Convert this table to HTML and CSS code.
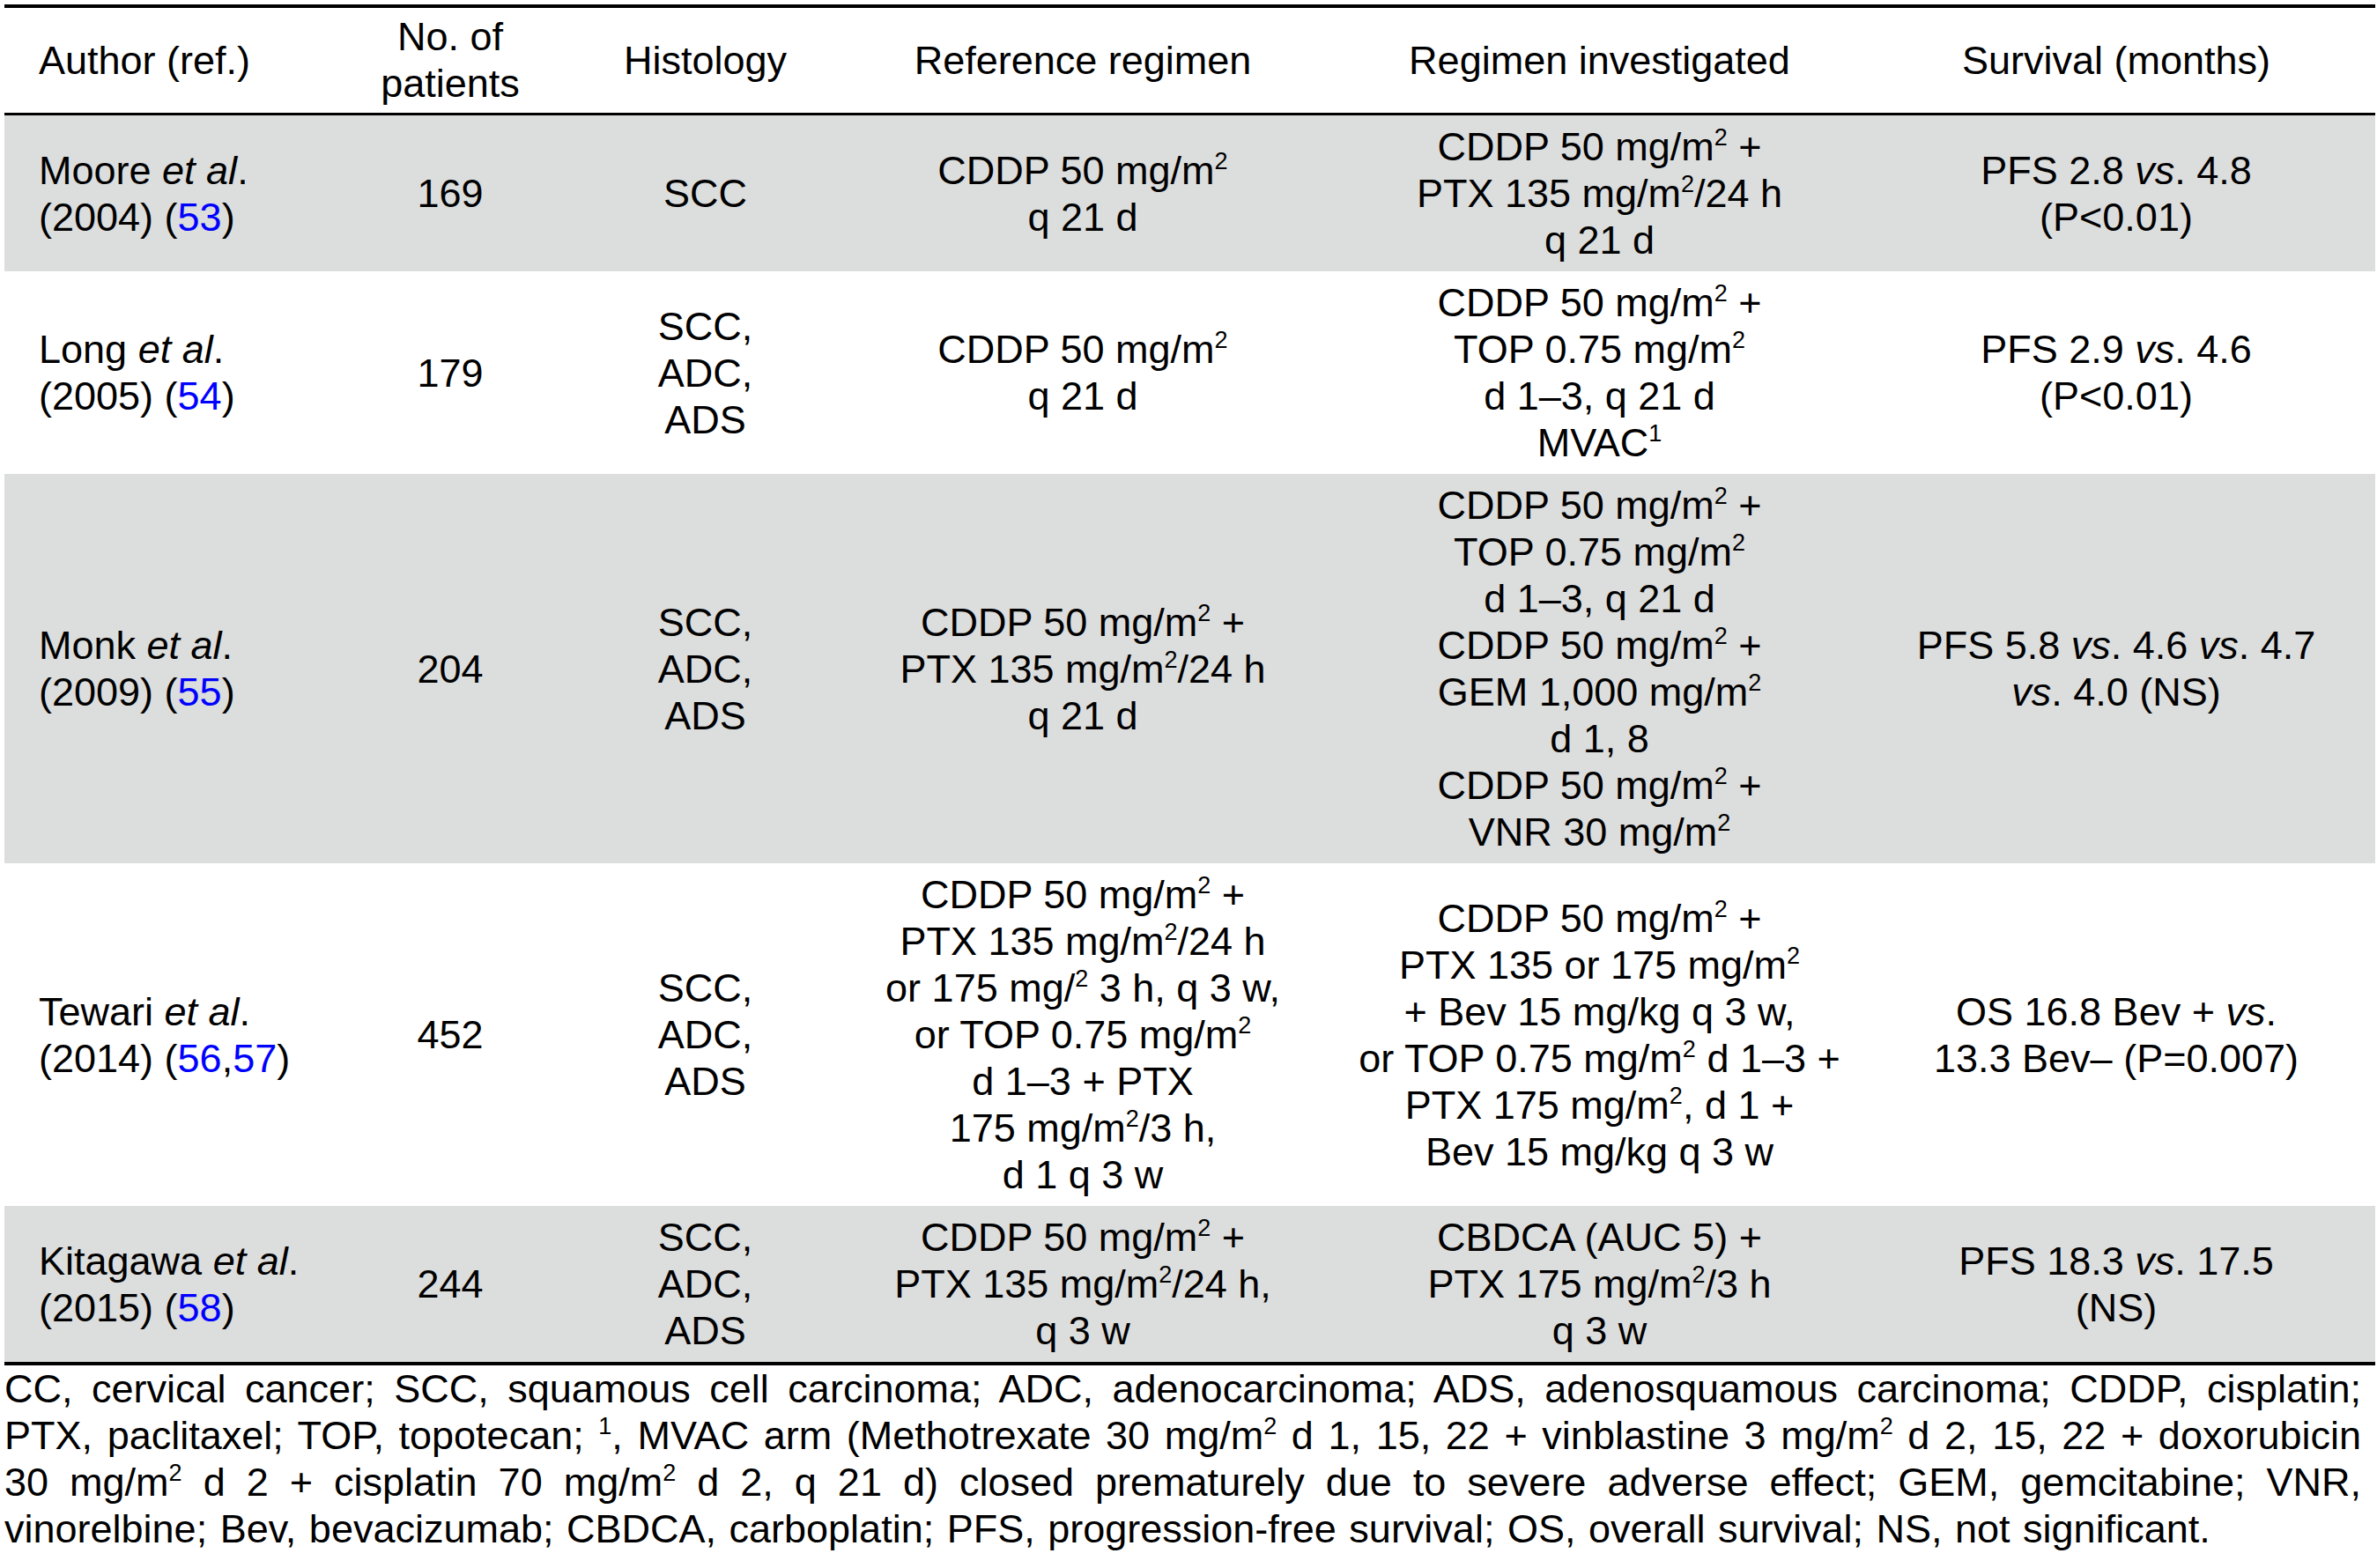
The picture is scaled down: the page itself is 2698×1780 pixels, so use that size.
FILE: index.html
```html
<!DOCTYPE html>
<html lang="en">
<head>
<meta charset="utf-8">
<title>Table</title>
<link rel="stylesheet" href="styles.css">
</head>
<body>
<div class="wrap">
<table class="trials">
  <colgroup>
    <col class="c1"><col class="c2"><col class="c3"><col class="c4"><col class="c5"><col class="c6">
  </colgroup>
  <thead>
    <tr>
      <th class="left">Author (ref.)</th>
      <th>No. of<br>patients</th>
      <th>Histology</th>
      <th>Reference regimen</th>
      <th>Regimen investigated</th>
      <th class="right">Survival (months)</th>
    </tr>
  </thead>
  <tbody>
    <tr class="shade">
      <td class="left">Moore <i>et al</i>.<br>(2004) (<a class="ref">53</a>)</td>
      <td>169</td>
      <td>SCC</td>
      <td>CDDP 50 mg/m<sup>2</sup><br>q 21 d</td>
      <td>CDDP 50 mg/m<sup>2</sup> +<br>PTX 135 mg/m<sup>2</sup>/24 h<br>q 21 d</td>
      <td class="right">PFS 2.8 <i>vs</i>. 4.8<br>(P&lt;0.01)</td>
    </tr>
    <tr>
      <td class="left">Long <i>et al</i>.<br>(2005) (<a class="ref">54</a>)</td>
      <td>179</td>
      <td>SCC,<br>ADC,<br>ADS</td>
      <td>CDDP 50 mg/m<sup>2</sup><br>q 21 d</td>
      <td>CDDP 50 mg/m<sup>2</sup> +<br>TOP 0.75 mg/m<sup>2</sup><br>d 1–3, q 21 d<br>MVAC<sup>1</sup></td>
      <td class="right">PFS 2.9 <i>vs</i>. 4.6<br>(P&lt;0.01)</td>
    </tr>
    <tr class="shade">
      <td class="left">Monk <i>et al</i>.<br>(2009) (<a class="ref">55</a>)</td>
      <td>204</td>
      <td>SCC,<br>ADC,<br>ADS</td>
      <td>CDDP 50 mg/m<sup>2</sup> +<br>PTX 135 mg/m<sup>2</sup>/24 h<br>q 21 d</td>
      <td>CDDP 50 mg/m<sup>2</sup> +<br>TOP 0.75 mg/m<sup>2</sup><br>d 1–3, q 21 d<br>CDDP 50 mg/m<sup>2</sup> +<br>GEM 1,000 mg/m<sup>2</sup><br>d 1, 8<br>CDDP 50 mg/m<sup>2</sup> +<br>VNR 30 mg/m<sup>2</sup></td>
      <td class="right">PFS 5.8 <i>vs</i>. 4.6 <i>vs</i>. 4.7<br><i>vs</i>. 4.0 (NS)</td>
    </tr>
    <tr>
      <td class="left">Tewari <i>et al</i>.<br>(2014) (<a class="ref">56</a>,<a class="ref">57</a>)</td>
      <td>452</td>
      <td>SCC,<br>ADC,<br>ADS</td>
      <td>CDDP 50 mg/m<sup>2</sup> +<br>PTX 135 mg/m<sup>2</sup>/24 h<br>or 175 mg/<sup>2</sup> 3 h, q 3 w,<br>or TOP 0.75 mg/m<sup>2</sup><br>d 1–3 + PTX<br>175 mg/m<sup>2</sup>/3 h,<br>d 1 q 3 w</td>
      <td>CDDP 50 mg/m<sup>2</sup> +<br>PTX 135 or 175 mg/m<sup>2</sup><br>+ Bev 15 mg/kg q 3 w,<br>or TOP 0.75 mg/m<sup>2</sup> d 1–3 +<br>PTX 175 mg/m<sup>2</sup>, d 1 +<br>Bev 15 mg/kg q 3 w</td>
      <td class="right">OS 16.8 Bev + <i>vs</i>.<br>13.3 Bev– (P=0.007)</td>
    </tr>
    <tr class="shade last">
      <td class="left">Kitagawa <i>et al</i>.<br>(2015) (<a class="ref">58</a>)</td>
      <td>244</td>
      <td>SCC,<br>ADC,<br>ADS</td>
      <td>CDDP 50 mg/m<sup>2</sup> +<br>PTX 135 mg/m<sup>2</sup>/24 h,<br>q 3 w</td>
      <td>CBDCA (AUC 5) +<br>PTX 175 mg/m<sup>2</sup>/3 h<br>q 3 w</td>
      <td class="right">PFS 18.3 <i>vs</i>. 17.5<br>(NS)</td>
    </tr>
  </tbody>
</table>
<p class="note">
  <span class="ln">CC, cervical cancer; SCC, squamous cell carcinoma; ADC, adenocarcinoma; ADS, adenosquamous carcinoma; CDDP, cisplatin;</span>
  <span class="ln">PTX, paclitaxel; TOP, topotecan; <sup>1</sup>, MVAC arm (Methotrexate 30 mg/m<sup>2</sup> d 1, 15, 22 + vinblastine 3 mg/m<sup>2</sup> d 2, 15, 22 + doxorubicin</span>
  <span class="ln">30 mg/m<sup>2</sup> d 2 + cisplatin 70 mg/m<sup>2</sup> d 2, q 21 d) closed prematurely due to severe adverse effect; GEM, gemcitabine; VNR,</span>
  <span class="ln end">vinorelbine; Bev, bevacizumab; CBDCA, carboplatin; PFS, progression-free survival; OS, overall survival; NS, not significant.</span>
</p>
</div>
</body>
</html>
```

FILE: styles.css
```css
html, body {
  margin: 0;
  padding: 0;
  background: #ffffff;
}

body {
  font-family: "Liberation Sans", Arial, Helvetica, sans-serif;
  font-size: 45px;
  line-height: 53px;
  color: #000000;
}

.wrap {
  padding: 5px 2px 0 5px;
  width: 2691px;
}

.trials {
  width: 2691px;
  table-layout: fixed;
  border-collapse: separate;
  border-spacing: 0;
}

.c1 { width: 361px; }
.c2 { width: 290px; }
.c3 { width: 289px; }
.c4 { width: 568px; }
.c5 { width: 605px; }
.c6 { width: 578px; }

.trials th,
.trials td {
  text-align: center;
  vertical-align: middle;
  white-space: nowrap;
  padding: 9px 6px;
  font-weight: normal;
}

.trials th {
  border-top: 4px solid #000000;
  border-bottom: 3px solid #000000;
  padding-top: 6px;
  padding-bottom: 7px;
}

.trials .left {
  text-align: left;
  padding-left: 39px;
}

.trials .right {
  padding-right: 16px;
}

.shade td {
  background: #dcdddd;
}

.last td {
  border-bottom: 4px solid #000000;
}

.ref {
  color: #0000ff;
  text-decoration: none;
}

sup {
  font-size: 0.6em;
  line-height: 0;
  vertical-align: 0.62em;
}

.note {
  margin: 0;
  padding-right: 16px;
}

.ln {
  display: block;
  text-align: justify;
  text-align-last: justify;
}

.ln.end {
  text-align: left;
  text-align-last: left;
  word-spacing: 2px;
}
```
